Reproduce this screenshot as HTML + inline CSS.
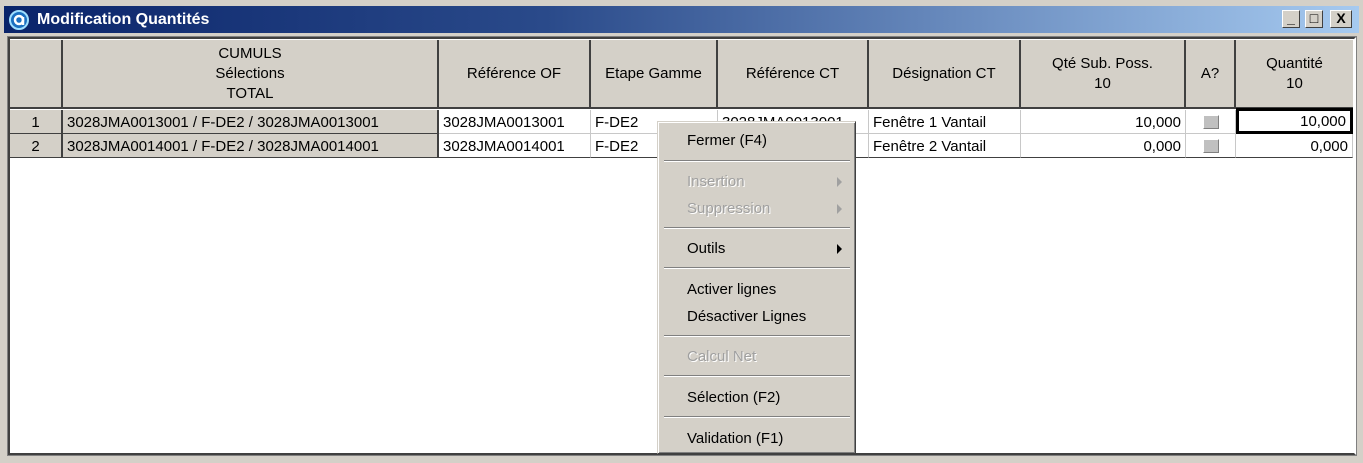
<!DOCTYPE html>
<html><head><meta charset="utf-8"><style>
*{margin:0;padding:0;box-sizing:border-box}
body{width:1363px;height:463px;background:#d4d0c8;position:relative;overflow:hidden;font-family:"Liberation Sans",sans-serif;font-size:15px;color:#000}
.a{position:absolute}
.title{left:4px;top:6px;width:1355px;height:27px;background:linear-gradient(90deg,#0a246a 0%,#2a4a8a 40%,#a6caf0 100%)}
.tt{left:37px;top:11px;color:#fff;font-weight:bold;font-size:16px}
.btn{top:10px;width:18px;height:18px;background:#d4d0c8;border:1px solid;border-color:#fff #404040 #404040 #fff;font-size:14px;line-height:15px;text-align:center;font-weight:bold}
.grid{left:8px;top:37px;width:1348px;height:418px;background:#fff;border:2px solid;border-color:#404040 #fff #404040 #404040;outline:1px solid #808080}
.h{background:#d4d0c8;border-right:2px solid #404040;border-bottom:2px solid #404040;text-align:center;display:flex;align-items:center;justify-content:center;line-height:20px;font-size:15px}
.c{border-right:1px solid #c8c8c8;border-bottom:1px solid #c8c8c8;white-space:nowrap;overflow:hidden;padding:0 4px;line-height:25px;font-size:15px}
.g{background:#d4d0c8;border-right:2px solid #404040;border-bottom:1px solid #404040}
.r{text-align:right}
.menu{left:657px;top:121px;width:199px;height:333px;background:#d4d0c8;border:1px solid;border-color:#d4d0c8 #404040 #404040 #d4d0c8;box-shadow:inset 1px 1px #fff,inset -1px -1px #808080}
.mi{position:absolute;left:29px;font-size:15px}
.dis{color:#a0a0a0;text-shadow:1px 1px #fff}
.sep{position:absolute;left:6px;width:186px;height:2px;border-top:1px solid #808080;border-bottom:1px solid #fff}
.ar{position:absolute;left:179px;width:0;height:0;border-top:5px solid transparent;border-bottom:5px solid transparent;border-left:5px solid #000}
.chk{width:16px;height:14px;background:#c0c0c0;border:1px solid;border-color:#fff #808080 #808080 #fff;margin:5px auto}
</style></head><body>
<div class="a title"></div>
<svg class="a" style="left:8px;top:9px" width="22" height="22" viewBox="0 0 22 22"><circle cx="11" cy="11" r="9" fill="#1a6fc0" stroke="#9fdfff" stroke-width="2"/><circle cx="11" cy="11" r="4" fill="none" stroke="#fff" stroke-width="2.5"/><path d="M15 8v8" stroke="#fff" stroke-width="2.5"/></svg>
<div class="a tt">Modification Quantités</div>
<div class="a btn" style="left:1282px">_</div>
<div class="a btn" style="left:1305px">□</div>
<div class="a btn" style="left:1330px;width:22px">X</div>
<div class="a grid"></div>
<div class="a h" style="left:10px;top:40px;width:53px;height:69px"></div>
<div class="a h" style="left:63px;top:40px;width:376px;height:69px">CUMULS<br>Sélections<br>TOTAL</div>
<div class="a h" style="left:439px;top:40px;width:152px;height:69px">Référence OF</div>
<div class="a h" style="left:591px;top:40px;width:127px;height:69px">Etape Gamme</div>
<div class="a h" style="left:718px;top:40px;width:151px;height:69px">Référence CT</div>
<div class="a h" style="left:869px;top:40px;width:152px;height:69px">Désignation CT</div>
<div class="a h" style="left:1021px;top:40px;width:165px;height:69px">Qté Sub. Poss.<br>10</div>
<div class="a h" style="left:1186px;top:40px;width:50px;height:69px">A?</div>
<div class="a h" style="left:1236px;top:40px;width:117px;height:69px;border-right:none">Quantité<br>10</div>
<div class="a c g" style="left:10px;top:110px;width:53px;height:24px;text-align:center">1</div>
<div class="a c g" style="left:63px;top:110px;width:376px;height:24px">3028JMA0013001 / F-DE2 / 3028JMA0013001</div>
<div class="a c" style="left:439px;top:110px;width:152px;height:24px">3028JMA0013001</div>
<div class="a c" style="left:591px;top:110px;width:127px;height:24px">F-DE2</div>
<div class="a c" style="left:718px;top:110px;width:151px;height:24px">3028JMA0013001</div>
<div class="a c" style="left:869px;top:110px;width:152px;height:24px">Fenêtre 1 Vantail</div>
<div class="a c r" style="left:1021px;top:110px;width:165px;height:24px">10,000</div>
<div class="a c" style="left:1186px;top:110px;width:50px;height:24px"><div class="chk"></div></div>
<div class="a c r" style="left:1236px;top:108px;width:117px;height:26px;border:3px solid #000;line-height:22px">10,000</div>
<div class="a c g" style="left:10px;top:134px;width:53px;height:24px;text-align:center">2</div>
<div class="a c g" style="left:63px;top:134px;width:376px;height:24px">3028JMA0014001 / F-DE2 / 3028JMA0014001</div>
<div class="a c" style="left:439px;top:134px;width:152px;height:24px;border-bottom:1px solid #404040">3028JMA0014001</div>
<div class="a c" style="left:591px;top:134px;width:127px;height:24px;border-bottom:1px solid #404040">F-DE2</div>
<div class="a c" style="left:718px;top:134px;width:151px;height:24px;border-bottom:1px solid #404040"></div>
<div class="a c" style="left:869px;top:134px;width:152px;height:24px;border-bottom:1px solid #404040">Fenêtre 2 Vantail</div>
<div class="a c r" style="left:1021px;top:134px;width:165px;height:24px;border-bottom:1px solid #404040">0,000</div>
<div class="a c" style="left:1186px;top:134px;width:50px;height:24px;border-bottom:1px solid #404040"><div class="chk"></div></div>
<div class="a c r" style="left:1236px;top:134px;width:117px;height:24px;border-bottom:1px solid #404040">0,000</div>
<div class="a menu">
<div class="mi" style="top:10px">Fermer (F4)</div>
<div class="sep" style="top:38px"></div>
<div class="mi dis" style="top:51px">Insertion</div><div class="ar" style="top:55px;border-left-color:#a0a0a0"></div>
<div class="mi dis" style="top:78px">Suppression</div><div class="ar" style="top:82px;border-left-color:#a0a0a0"></div>
<div class="sep" style="top:105px"></div>
<div class="mi" style="top:118px">Outils</div><div class="ar" style="top:122px"></div>
<div class="sep" style="top:145px"></div>
<div class="mi" style="top:159px">Activer lignes</div>
<div class="mi" style="top:186px">Désactiver Lignes</div>
<div class="sep" style="top:213px"></div>
<div class="mi dis" style="top:226px">Calcul Net</div>
<div class="sep" style="top:253px"></div>
<div class="mi" style="top:267px">Sélection (F2)</div>
<div class="sep" style="top:294px"></div>
<div class="mi" style="top:308px">Validation (F1)</div>
</div>
</body></html>
